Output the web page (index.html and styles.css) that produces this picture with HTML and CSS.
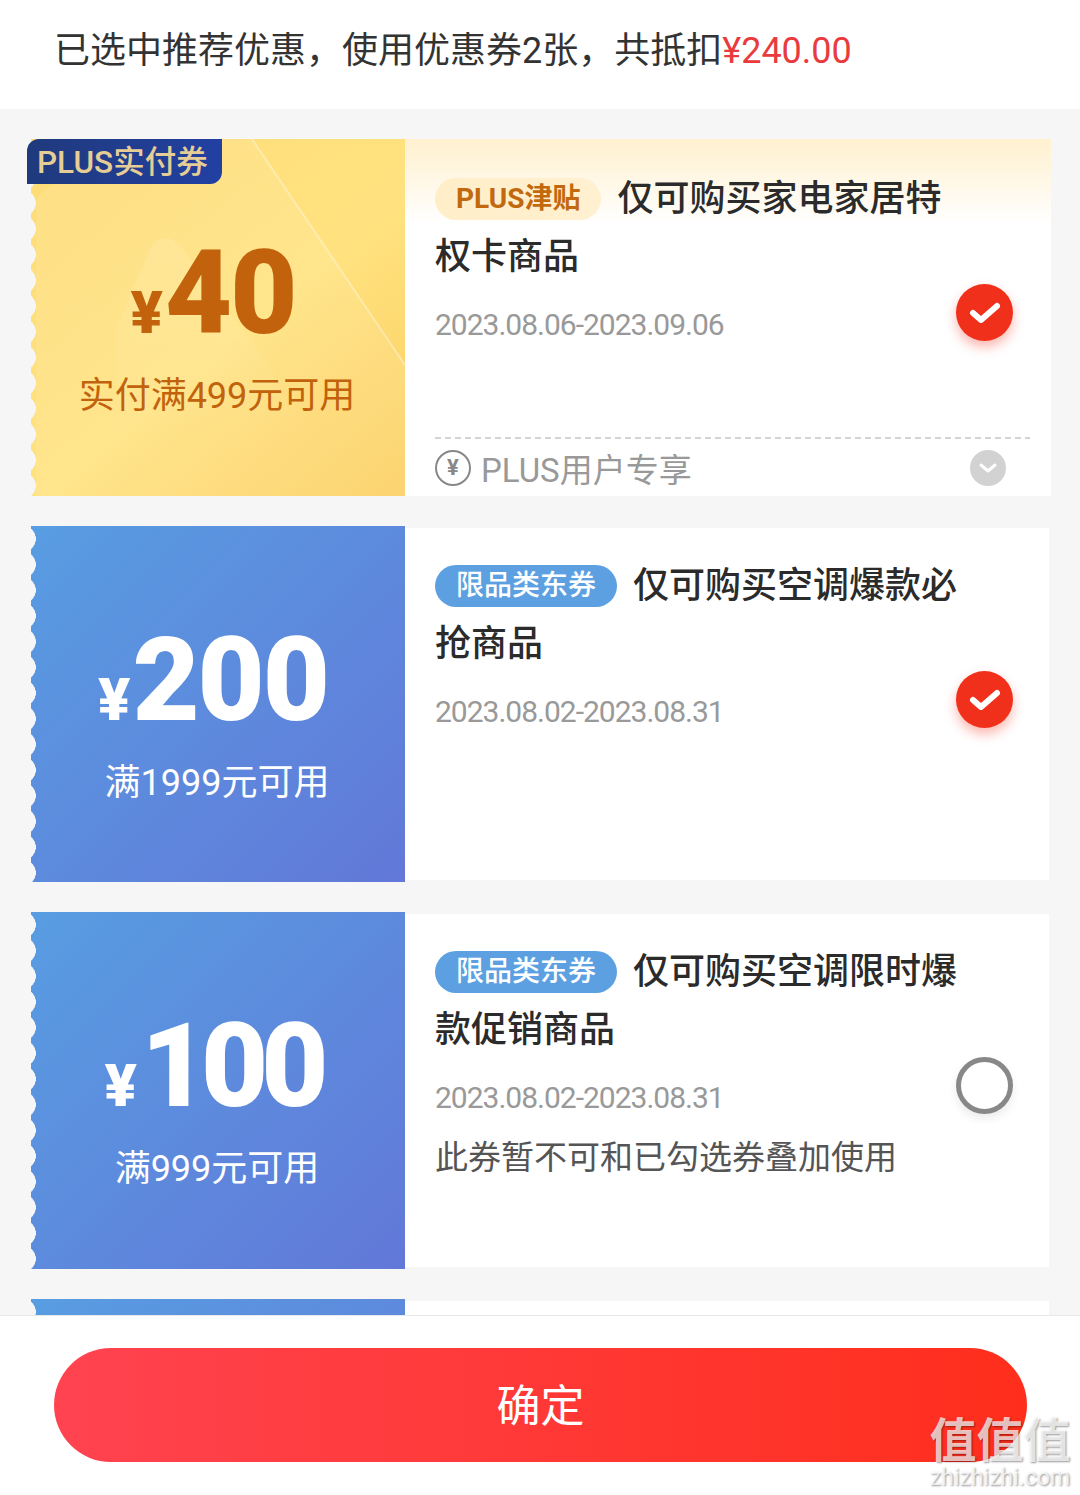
FILE: index.html
```html
<!DOCTYPE html>
<html lang="zh-CN">
<head>
    <meta charset="UTF-8">
    <meta name="viewport" content="width=device-width, initial-scale=1.0">
    <title>优惠券</title>
    <link rel="stylesheet" href="styles.css">
</head>
<body>
    <div class="page">
        <div class="summary">已选中推荐优惠，使用优惠券2张，共抵扣<span class="summary-price">¥240.00</span></div>

        <div class="coupon-list">
            <!-- PLUS券 -->
            <div class="coupon coupon-plus">
                <div class="coupon-left">
                    <svg class="coupon-deco" viewBox="0 0 374 357" aria-hidden="true">
                        <defs>
                            <linearGradient id="hill-fade" x1="0" y1="0" x2="0" y2="1">
                                <stop offset="0" stop-color="#fff" stop-opacity="0.12"/>
                                <stop offset="1" stop-color="#fff" stop-opacity="0"/>
                            </linearGradient>
                        </defs>
                        <path d="M5 70 Q5 52 24 45 L190 0 L221 0 L374 226 L374 357 L5 357 Z" fill="#fff" opacity="0.1"/>
                        <path d="M221 0 L374 226" stroke="#fff" stroke-width="2" opacity="0.35" fill="none"/>
                        <path d="M85 190 L120 108 Q134 90 150 108 L240 230 L272 300 L85 300 Z" fill="url(#hill-fade)"/>
                    </svg>
                    <div class="coupon-badge">PLUS实付券</div>
                    <div class="coupon-amount"><span class="coupon-yen">¥</span>40</div>
                    <div class="coupon-cond">实付满499元可用</div>
                </div>
                <div class="coupon-right">
                    <div class="coupon-main">
                        <div class="coupon-info">
                            <div class="coupon-title">
                                <div class="title-line"><span class="tag tag-plus">PLUS津贴</span><span>仅可购买家电家居特</span></div>
                                <div class="title-line">权卡商品</div>
                            </div>
                            <div class="coupon-date">2023.08.06-2023.09.06</div>
                        </div>
                        <div class="check check-on">
                            <svg viewBox="0 0 57 57"><path d="M17 29 L25 36 L41 22" fill="none" stroke="#fff" stroke-width="6" stroke-linecap="round" stroke-linejoin="round"/></svg>
                        </div>
                    </div>
                    <div class="coupon-foot">
                        <span class="yen-ring">¥</span>
                        <span class="foot-text">PLUS用户专享</span>
                        <span class="foot-arrow">
                            <svg viewBox="0 0 36 36"><path d="M11 15 L18 21 L25 15" fill="none" stroke="#fff" stroke-width="3" stroke-linecap="round" stroke-linejoin="round"/></svg>
                        </span>
                    </div>
                </div>
            </div>

            <div class="coupon">
                <div class="coupon-left">
                    <div class="coupon-amount"><span class="coupon-yen">¥</span>200</div>
                    <div class="coupon-cond">满1999元可用</div>
                </div>
                <div class="coupon-right">
                    <div class="coupon-main">
                        <div class="coupon-info">
                            <div class="coupon-title">
                                <div class="title-line"><span class="tag">限品类东券</span><span>仅可购买空调爆款必</span></div>
                                <div class="title-line">抢商品</div>
                            </div>
                            <div class="coupon-date">2023.08.02-2023.08.31</div>
                        </div>
                        <div class="check check-on">
                            <svg viewBox="0 0 57 57"><path d="M17 29 L25 36 L41 22" fill="none" stroke="#fff" stroke-width="6" stroke-linecap="round" stroke-linejoin="round"/></svg>
                        </div>
                    </div>
                </div>
            </div>

            <div class="coupon">
                <div class="coupon-left">
                    <div class="coupon-amount amount-tight"><span class="coupon-yen">¥</span>100</div>
                    <div class="coupon-cond">满999元可用</div>
                </div>
                <div class="coupon-right">
                    <div class="coupon-main">
                        <div class="coupon-info">
                            <div class="coupon-title">
                                <div class="title-line"><span class="tag">限品类东券</span><span>仅可购买空调限时爆</span></div>
                                <div class="title-line">款促销商品</div>
                            </div>
                            <div class="coupon-date">2023.08.02-2023.08.31</div>
                            <div class="coupon-note">此券暂不可和已勾选券叠加使用</div>
                        </div>
                        <div class="check"></div>
                    </div>
                </div>
            </div>

            <!-- 被底部按钮挡住的一张 -->
            <div class="coupon">
                <div class="coupon-left"></div>
                <div class="coupon-right"></div>
            </div>
        </div>

        <div class="footer">
            <button class="confirm-btn">确定</button>
        </div>

        <div class="watermark">
            <div class="watermark-logo">值值值</div>
            <div class="watermark-url">zhizhizhi.com</div>
        </div>
    </div>
</body>
</html>
```

FILE: styles.css
```css
* {
    margin: 0;
    padding: 0;
    box-sizing: border-box;
}

body {
    font-family: Roboto, "Noto Sans CJK SC", sans-serif;
    background-color: #f6f6f6;
}

.page {
    position: relative;
    width: 1080px;
    height: 1495px;
    display: flex;
    flex-direction: column;
    overflow: hidden;
}

.summary {
    height: 109px;
    flex: none;
    padding: 26px 0 0 54px;
    font-size: 36px;
    line-height: 50px;
    color: #333;
    background-color: #fff;
}

.summary-price {
    color: #e93b3d;
}

.coupon-list {
    flex: 1;
    min-height: 0;
    overflow: hidden;
    padding: 30px 29px 0 31px;
    display: flex;
    flex-direction: column;
    gap: 30px;
}

.coupon {
    flex: none;
    height: 356.5px;
    display: flex;
}

/* 左侧金额 */
.coupon-left {
    position: relative;
    flex: none;
    width: 374px;
    display: flex;
    flex-direction: column;
    align-items: center;
    color: #fff;
    background: linear-gradient(135deg, #589de2, #6278d8);
}

/* 锯齿边 */
.coupon-left::before {
    content: "";
    position: absolute;
    left: 0;
    top: 0;
    bottom: 0;
    width: 6px;
    background: radial-gradient(circle at -8px 50%, #f6f6f6 12.6px, transparent 13px) 0 0 / 6px 25.7px repeat-y;
}

.coupon-plus .coupon-left {
    color: #c2620c;
    background: linear-gradient(140deg, #fedc78 0%, #ffe27f 55%, #fccf60 100%);
}

.coupon-deco {
    position: absolute;
    left: 0;
    top: 0;
    width: 374px;
    height: 357px;
}

.coupon-badge {
    position: absolute;
    left: -4px;
    top: 0;
    width: 195px;
    height: 45px;
    padding-left: 10px;
    font-size: 31.5px;
    font-weight: 500;
    line-height: 47px;
    color: #e6cd95;
    white-space: nowrap;
    background: linear-gradient(90deg, #1f3a7c, #2240a2);
    border-radius: 12px 0 12px 0;
}

.coupon-amount {
    position: relative;
    margin-top: 89px;
    height: 130px;
    padding-right: 10px;
    font-size: 116px;
    line-height: 130px;
    font-weight: 900;
    letter-spacing: -2px;
    white-space: nowrap;
}

.amount-tight {
    letter-spacing: -7px;
}

.coupon-yen {
    font-size: 60px;
    letter-spacing: 0;
    margin-right: 2px;
}

.amount-tight .coupon-yen {
    margin-right: 4px;
}

.coupon-cond {
    position: relative;
    margin-top: 14px;
    margin-right: 2px;
    font-size: 36px;
    line-height: 48px;
    white-space: nowrap;
}

/* 右侧内容 */
.coupon-right {
    flex: 1;
    margin: 2px 2px 2px 0;
    padding-left: 30px;
    display: flex;
    flex-direction: column;
    background-color: #fff;
}

.coupon-plus .coupon-right {
    margin: 0;
    background: linear-gradient(180deg, #fff1cf 0, #fff 85px);
}

.coupon-main {
    flex: 1;
    display: flex;
}

.coupon-info {
    flex: none;
    width: 530px;
    padding-top: 29px;
}

.coupon-plus .coupon-info {
    padding-top: 31px;
}

.coupon-title {
    font-size: 36px;
    line-height: 58px;
    font-weight: 500;
    color: #2b2b2b;
}

.title-line {
    height: 58px;
    display: flex;
    align-items: center;
    white-space: nowrap;
}

.tag {
    flex: none;
    height: 42px;
    padding: 0 21px;
    margin-right: 16px;
    font-size: 28px;
    line-height: 42px;
    font-weight: 500;
    color: #fff;
    background-color: #5ca0e2;
    border-radius: 21px;
}

.tag-plus {
    font-weight: 700;
    color: #c2690f;
    background: linear-gradient(90deg, #ffeec8, #fff0d0);
}

.coupon-date {
    margin-top: 19px;
    font-size: 30px;
    line-height: 40px;
    letter-spacing: -1px;
    color: #999;
}

.coupon-note {
    margin-top: 18px;
    font-size: 33px;
    line-height: 44px;
    color: #555;
}

.check {
    flex: none;
    width: 57px;
    height: 57px;
    margin: 143px 0 0 -9px;
    border: 5px solid #888;
    border-radius: 50%;
    box-shadow: 0 5px 10px rgba(0, 0, 0, 0.08);
}

.coupon-plus .check {
    margin-top: 145px;
}

.check-on {
    border: none;
    background-color: #f0301a;
    box-shadow: 0 6px 12px rgba(240, 48, 26, 0.35);
}

.check svg {
    display: block;
    width: 57px;
    height: 57px;
}

.coupon-foot {
    flex: none;
    height: 59px;
    margin-right: 21px;
    padding: 3px 24px 0 0;
    display: flex;
    align-items: center;
    background: repeating-linear-gradient(90deg, #d4d4d4 0, #d4d4d4 6px, transparent 6px, transparent 10px) 0 0 / 100% 2px no-repeat;
}

.yen-ring {
    flex: none;
    width: 36px;
    height: 36px;
    margin-right: 10px;
    font-size: 22px;
    line-height: 32px;
    font-weight: 700;
    text-align: center;
    color: #888;
    border: 2px solid #888;
    border-radius: 50%;
}

.foot-text {
    flex: 1;
    font-size: 33px;
    color: #999;
}

.foot-arrow {
    flex: none;
    width: 36px;
    height: 36px;
    background-color: #d2d2d2;
    border-radius: 50%;
}

.foot-arrow svg {
    display: block;
    width: 36px;
    height: 36px;
}

/* 底部按钮 */
.footer {
    flex: none;
    height: 180px;
    padding: 32px 53px 0 54px;
    background-color: #fff;
    border-top: 1px solid #e8e8e8;
}

.confirm-btn {
    display: block;
    width: 100%;
    height: 114px;
    padding-bottom: 4px;
    font-family: inherit;
    font-size: 44px;
    color: #fff;
    border: none;
    border-radius: 57px;
    background: linear-gradient(90deg, #ff4350, #ff2e1c);
}

/* 水印 */
.watermark {
    position: absolute;
    right: 8px;
    bottom: 5px;
    width: 144px;
    text-align: center;
    color: rgba(255, 255, 255, 0.72);
    text-shadow: 1px 1px 2px rgba(0, 0, 0, 0.4);
}

.watermark-logo {
    font-size: 47px;
    line-height: 50px;
    font-weight: 700;
    white-space: nowrap;
}

.watermark-url {
    font-size: 23px;
    line-height: 24px;
    white-space: nowrap;
}
```
